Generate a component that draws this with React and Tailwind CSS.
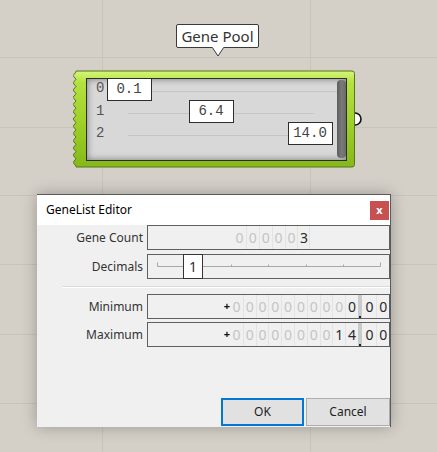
import React from "react";

const F = { fontFamily: '"Noto Sans", "Open Sans", sans-serif' };
const M = { fontFamily: '"Liberation Mono", monospace' };

function Cell({ ch, dark, first, last, w }) {
  return (
    <div
      className={
        (first ? "" : "border-l ") +
        (last ? "border-r " : "") +
        "border-[#e3e3e3] h-full flex items-center justify-center shrink-0 " +
        (dark ? "text-[#2a2a2a]" : "text-[#c4c4c4]")
      }
      style={{ width: w }}
    >
      {ch}
    </div>
  );
}

function Node() {
  const top = 2, bot = 96, n = 13;
  const step = (bot - top) / n;
  let d = `M 3 ${top}`;
  for (let i = 0; i < n; i++) {
    const y0 = top + i * step;
    d += ` L 0 ${y0 + step / 2} L 3 ${y0 + step}`;
  }
  d += ` L 3 97 L 279 97 Q 281.5 97 281.5 94.5 L 281.5 3.5 Q 281.5 1 279 1 L 3 1 Z`;
  return (
    <div className="absolute left-[73px] top-[70px] w-[282px] h-[98px]">
      <svg className="absolute inset-0" width="290" height="98" viewBox="0 0 290 98">
        <defs>
          <linearGradient id="g" x1="0" y1="0" x2="0" y2="1">
            <stop offset="0" stopColor="#d6f57a" />
            <stop offset="0.12" stopColor="#b4e13f" />
            <stop offset="0.6" stopColor="#9ccd26" />
            <stop offset="1" stopColor="#86b81a" />
          </linearGradient>
        </defs>
        <path d={d} fill="url(#g)" stroke="#55781a" strokeWidth="1" />
        <path d="M 282 43 A 6 6 0 0 1 282 55" fill="white" stroke="#111" strokeWidth="1.6" />
      </svg>
      <div className="absolute left-[13px] top-[8px] w-[261px] h-[83px] border-[1.5px] border-[#2d2d2d] bg-[#d8d8d8] shadow-[inset_0_0_7px_rgba(0,0,0,0.45)]">
        <div className="absolute left-[64px] top-[12px] w-[186px] h-[1px] bg-[#c6c6c6]" />
        <div className="absolute left-[41px] top-[34px] w-[186px] h-[1px] bg-[#c6c6c6]" />
        <div className="absolute left-[41px] top-[56px] w-[186px] h-[1px] bg-[#c6c6c6]" />
        <div className="absolute left-[9px] top-[1px] text-[14px] leading-[16px] text-[#555]" style={M}>0</div>
        <div className="absolute left-[9px] top-[24px] text-[14px] leading-[16px] text-[#555]" style={M}>1</div>
        <div className="absolute left-[9px] top-[46px] text-[14px] leading-[16px] text-[#555]" style={M}>2</div>
        <div className="absolute left-[19.5px] top-[-1.5px] w-[45px] h-[23px] border-[1.5px] border-[#2d2d2d] bg-white flex items-center justify-center text-[14px] text-[#444]" style={M}>0.1</div>
        <div className="absolute left-[101.5px] top-[20.5px] w-[45px] h-[23px] border-[1.5px] border-[#2d2d2d] bg-white flex items-center justify-center text-[14px] text-[#444]" style={M}>6.4</div>
        <div className="absolute left-[200.5px] top-[42.5px] w-[45px] h-[23px] border-[1.5px] border-[#2d2d2d] bg-white flex items-center justify-center text-[14px] text-[#444]" style={M}>14.0</div>
        <div className="absolute right-[0.5px] top-[0.5px] w-[9px] h-[78px] rounded-[4px] bg-gradient-to-r from-[#5c5c5c] via-[#7a7a7a] to-[#6a6a6a]" />
      </div>
    </div>
  );
}

function Balloon() {
  return (
    <div className="absolute left-[176px] top-[24px]">
      <div className="w-[83px] h-[24px] border border-[#3a3a3a] rounded-[2px] bg-white flex items-center justify-center text-[15px] text-[#333]" style={F}>
        Gene Pool
      </div>
      <svg className="absolute left-[35px] top-[22px]" width="14" height="12" viewBox="0 0 14 12">
        <path d="M 1 1 L 7 10 L 13 1" fill="white" stroke="#3a3a3a" strokeWidth="1" />
        <rect x="1.6" y="0" width="10.8" height="1.5" fill="white" />
      </svg>
    </div>
  );
}

function NumField({ digits, darkFrom }) {
  const ints = digits.slice(0, 10);
  const decs = digits.slice(10);
  return (
    <div className="w-[243px] h-[25px] border border-[#5f5f5f] bg-[#f0f0f0] flex text-[14px]" style={F}>
      <div className="w-[82px] shrink-0 flex items-center justify-end text-[#111] text-[11px] font-bold">+</div>
      {ints.map((c, i) => (
        <Cell key={i} ch={c} dark={i >= darkFrom} first={i === 0} w={12.8} />
      ))}
      <div className="w-[4.5px] shrink-0 bg-[#cacaca] relative">
        <div className="absolute left-[1px] bottom-[0px] w-[2.5px] h-[2.5px] bg-[#222]" />
      </div>
      <Cell ch={decs[0]} dark first w={14} />
      <div className="border-l border-[#e3e3e3] h-full flex-1 flex items-center justify-center text-[#2a2a2a]">{decs[1]}</div>
    </div>
  );
}

export default function App() {
  return (
    <div className="relative w-[437px] h-[452px] bg-[#d4d0c8] overflow-hidden">
      <div className="absolute left-[102px] top-0 w-[1px] h-[452px] bg-[#c8c4bc]" />
      <div className="absolute left-[310px] top-0 w-[1px] h-[452px] bg-[#c8c4bc]" />
      <div className="absolute left-0 top-[57px] w-[437px] h-[1px] bg-[#c8c4bc]" />
      <div className="absolute left-0 top-[127px] w-[437px] h-[1px] bg-[#c8c4bc]" />
      <div className="absolute left-0 top-[195px] w-[437px] h-[1px] bg-[#c8c4bc]" />
      <div className="absolute left-0 top-[264px] w-[437px] h-[1px] bg-[#c8c4bc]" />
      <div className="absolute left-0 top-[334px] w-[437px] h-[1px] bg-[#c8c4bc]" />
      <div className="absolute left-0 top-[403px] w-[437px] h-[1px] bg-[#c8c4bc]" />

      <Balloon />
      <Node />

      <div className="absolute left-[37px] top-[194px] w-[354px] h-[233px] bg-[#f0f0f0] shadow-[0_0_14px_rgba(0,0,0,0.28)] flex flex-col" style={F}>
        <div className="h-[31px] shrink-0 bg-white border-t border-r border-[#5a5a5a] flex items-center justify-between pl-[9px] pr-[1px]">
          <div className="text-[12px] text-black">GeneList Editor</div>
          <div className="w-[19px] h-[19px] bg-[#c75050] flex items-center justify-center text-white text-[11px] font-bold leading-none pb-[2px]">x</div>
        </div>
        <div className="flex-1 flex flex-col border-r border-[#5a5a5a]">
          <div className="flex items-center gap-[4px] h-[25px]">
            <div className="w-[106px] text-right text-[12px] text-[#333]">Gene Count</div>
            <div className="w-[243px] h-[25px] border border-[#5f5f5f] bg-[#f0f0f0] flex text-[14px]">
              <div className="w-[85px] shrink-0" />
              {["0", "0", "0", "0", "0", "3"].map((c, i) => (
                <Cell key={i} ch={c} dark={i === 5} first={i === 0} last={i === 5} w={12.9} />
              ))}
            </div>
          </div>
          <div className="flex items-center gap-[4px] h-[25px] mt-[4px]">
            <div className="w-[106px] text-right text-[12px] text-[#333]">Decimals</div>
            <div className="w-[243px] h-[25px] border border-[#5f5f5f] bg-[#f0f0f0] relative">
              <svg className="absolute left-0 top-0" width="241" height="23" viewBox="0 0 241 23">
                <g stroke="#a8a8a8" strokeWidth="1" fill="none">
                  <path d="M 9.5 7.5 L 9.5 11.5 L 232.5 11.5 L 232.5 7.5" />
                  <path d="M 83.5 9.5 L 83.5 11.5 M 120.5 9.5 L 120.5 11.5 M 158.5 9.5 L 158.5 11.5 M 195.5 9.5 L 195.5 11.5" />
                </g>
              </svg>
              <div className="absolute left-[35px] top-[-1px] w-[20px] h-[25px] border border-[#333] bg-white flex items-center justify-center text-[14px] text-[#333]">1</div>
            </div>
          </div>
          <div className="ml-[25px] mt-[7px] h-[1px] bg-[#dadada] border-b border-white box-content" />
          <div className="flex items-center gap-[4px] h-[25px] mt-[6px]">
            <div className="w-[106px] text-right text-[12px] text-[#333]">Minimum</div>
            <NumField digits={["0","0","0","0","0","0","0","0","0","0","0","0"]} darkFrom={9} />
          </div>
          <div className="flex items-center gap-[4px] h-[25px] mt-[3px]">
            <div className="w-[106px] text-right text-[12px] text-[#333]">Maximum</div>
            <NumField digits={["0","0","0","0","0","0","0","0","1","4","0","0"]} darkFrom={8} />
          </div>
          <div className="flex-1" />
          <div className="flex justify-end gap-[2px] pb-[1px]">
            <div className="w-[83px] h-[28px] bg-[#e1e1e1] border-2 border-[#0078d7] flex items-center justify-center text-[12px] text-[#222]">OK</div>
            <div className="w-[84px] h-[28px] bg-[#e1e1e1] border border-[#adadad] flex items-center justify-center text-[12px] text-[#222]">Cancel</div>
          </div>
        </div>
      </div>
    </div>
  );
}
